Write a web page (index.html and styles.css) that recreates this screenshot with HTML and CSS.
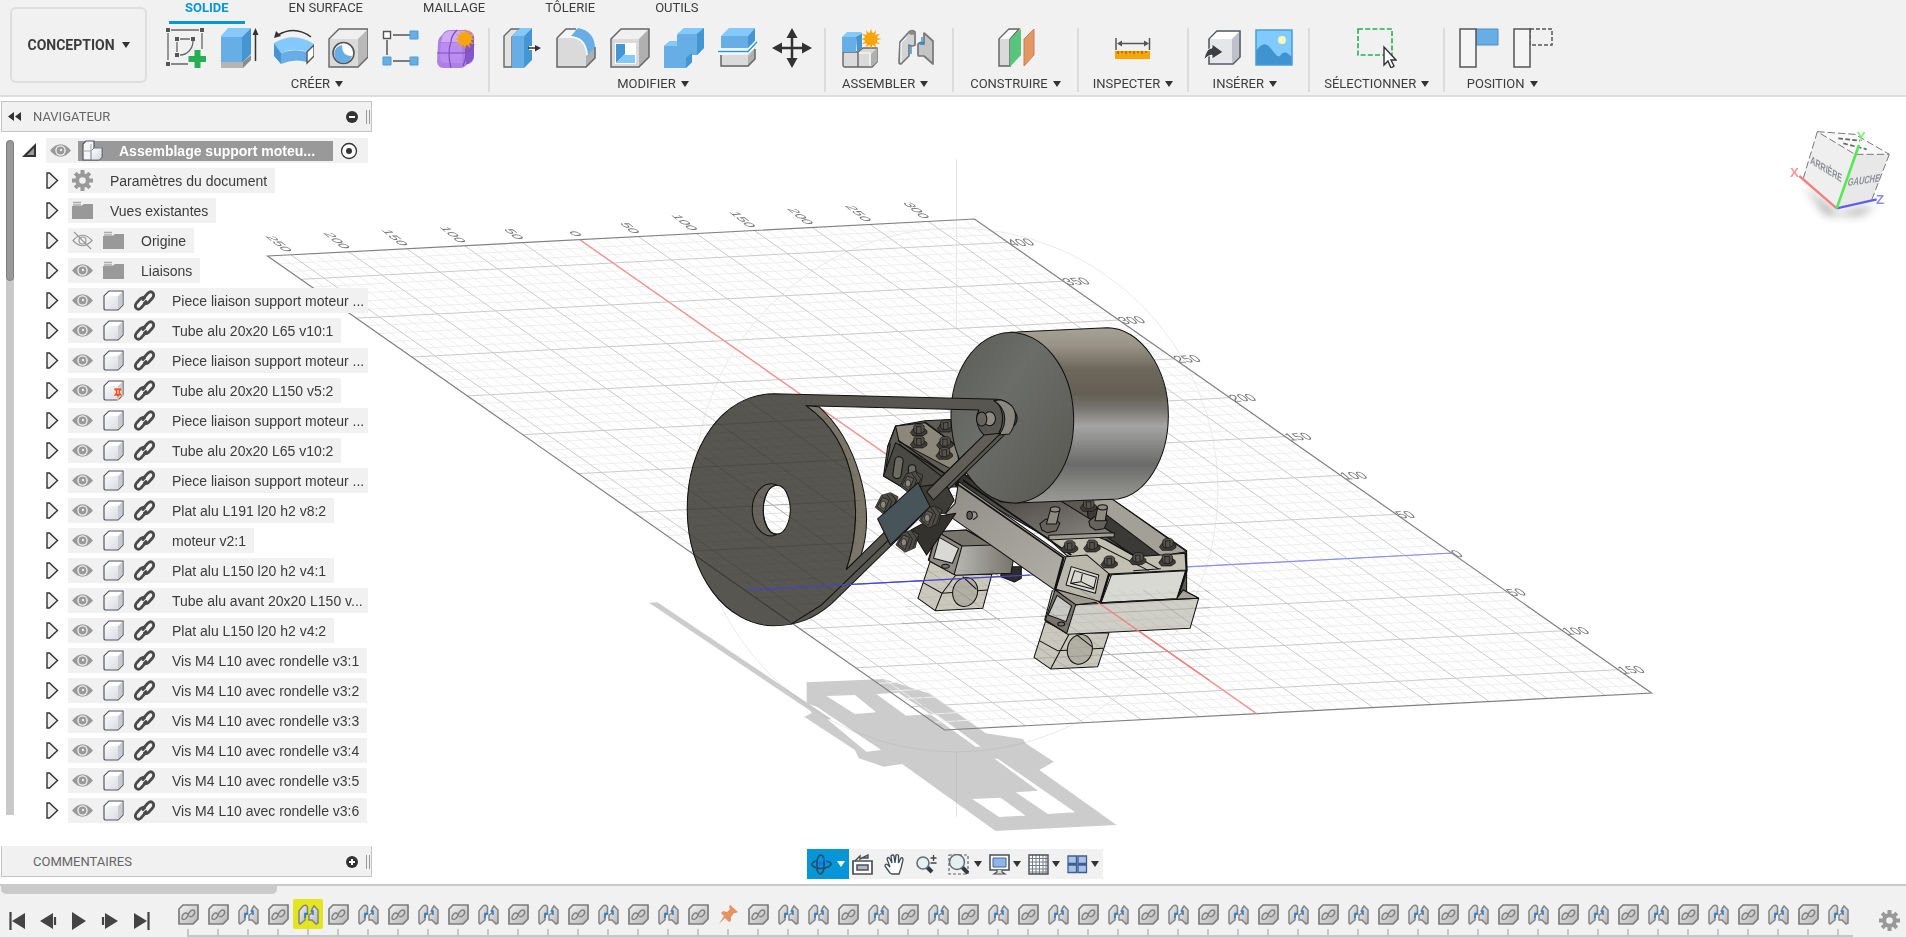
FILE: index.html
```html
<!DOCTYPE html>
<html lang="fr">
<head>
<meta charset="utf-8">
<title>Assemblage support moteur</title>
<link rel="stylesheet" href="styles.css">
</head>
<body>
<svg class="defs" aria-hidden="true">
  <defs>
    <g id="star" fill="#faa506">
      <circle r="6.5"/>
      <path id="ray" d="M0-10.5L2.8 0 0 10.5-2.8 0Z"/>
      <use href="#ray" transform="rotate(30)"/><use href="#ray" transform="rotate(60)"/><use href="#ray" transform="rotate(90)"/><use href="#ray" transform="rotate(120)"/><use href="#ray" transform="rotate(150)"/>
    </g>
    <linearGradient id="cubeFill" x1="0" y1="0" x2="1" y2="1"><stop offset="0" stop-color="#fff"/><stop offset="1" stop-color="#d5d6de"/></linearGradient>
    <linearGradient id="metal" x1="0" y1="0" x2="1" y2="1"><stop offset="0" stop-color="#f4f4f4"/><stop offset="1" stop-color="#b4b4b4"/></linearGradient>
  </defs>
  <symbol id="i-sketch" viewBox="0 0 40 40">
    <path d="M2 5V32M5 2H33M36 5V21M5 36H22M11 14V24M14 11H24M27 13C27 21 21 27 14 27" fill="none" stroke="#666" stroke-width="1.3"/>
    <path d="M0 0h4v4H0zM34 0h4v4h-4zM0 34h4v4H0zM9 9h4v4H9zM25 9h4v4h-4zM9 25h4v4H9z" fill="#555"/>
    <path d="M28.500 22h6v6h6v6h-6v6h-6v-6h-6v-6h6z" fill="#27ae52"/>
  </symbol>
  <symbol id="i-extrude" viewBox="0 0 40 40">
    <path d="M1 34H23V40H1Z" fill="#b5b5b5"/><path d="M23 34L31 27V32L23 40Z" fill="#8b8b8b"/>
    <path d="M1 9H22V34H1Z" fill="#68aee6"/><path d="M1 8L8 0H31L22 9H1Z" fill="#84c9fb"/><path d="M22 9L31 0V26L23 34H22Z" fill="#4396d2"/>
    <path d="M35.500 33V5" stroke="#333" stroke-width="1.500"/><path d="M35.500 0L38.500 7H32.500Z" fill="#333"/>
  </symbol>
  <symbol id="i-revolve" viewBox="0 0 40 40">
    <path d="M0 15Q20 3 40 16L34 24Q20 19 7 25Z" fill="#84c9fb"/>
    <path d="M0 15L7 25V36L0 28Z" fill="#4396d2"/><path d="M7 25Q20 20 33 24V34Q20 30 7 36Z" fill="#68aee6"/>
    <path d="M33 24L40 17V28L33 35Z" fill="#fff" stroke="#555" stroke-width="1.400"/>
    <path d="M37 9Q21-3 4 7" fill="none" stroke="#333" stroke-width="1.500"/><path d="M0 10L2 3 7 8Z" fill="#333"/>
  </symbol>
  <symbol id="i-hole" viewBox="0 0 40 40">
    <path d="M1 11L11 1H40V29L30 39H1Z" fill="#dadada"/><path d="M1 11L11 1H40L30 11Z" fill="#efefef"/><path d="M30 11L40 1V29L30 39Z" fill="#b9b9b9"/>
    <path d="M1 11L11 1H40V29L30 39H1Z" fill="none" stroke="#666" stroke-width="1.400"/>
    <circle cx="15.500" cy="25" r="10.500" fill="#fff" stroke="#555" stroke-width="1.600"/><path d="M14 17A9 9 0 1 0 24 28Q14 29 14 17Z" fill="#68aee6"/>
  </symbol>
  <symbol id="i-pattern" viewBox="0 0 40 40">
    <path d="M11 7H28M5 12V27M11 33H28" stroke="#555" stroke-width="1.500"/><path d="M1.500 3.500h7v7h-7z" fill="#fff" stroke="#555" stroke-width="1.400"/>
    <path d="M28 3h8v8h-8zM1 29h8v8H1zM28 29h8v8h-8z" fill="#68aee6" stroke="#4a9cd8"/>
  </symbol>
  <symbol id="i-form" viewBox="0 0 40 40">
    <path d="M2 15Q2 10 6 7Q9 2 14 2H30Q38 3 38 10V30Q36 36 31 36Q29 40 24 40H8Q2 40 1 34Z" fill="#b07fe6"/>
    <path d="M7 7Q10 3 14 3H30L33 10 28 14H5Z" fill="#cfaaf6"/><path d="M30 14L38 8V28Q37 34 30 37Z" fill="#8657c8"/>
    <path d="M5 15H26V35H7Q4 33 4 29Z" fill="#bb8df0"/>
    <path d="M1 25H28Q36 24 38 16M15 40Q11 24 15 14Q15 8 21 2M27 13Q33 25 27 38" fill="none" stroke="#7d4fbd" stroke-width="1.200"/>
    <use href="#star" x="29" y="11"/>
  </symbol>
  <symbol id="i-press" viewBox="0 0 40 40">
    <path d="M2 8L9 1H18L10 9V39H2Z" fill="#e2e2e2" stroke="#666" stroke-width="1.400"/>
    <path d="M10 8H22V40H10Z" fill="#68aee6"/><path d="M10 8L18 0H30L22 8Z" fill="#84c9fb"/><path d="M22 8L30 0V32L22 40Z" fill="#4396d2"/>
    <path d="M27 20H35" stroke="#fff" stroke-width="4"/><path d="M26 20H34" stroke="#333" stroke-width="1.500"/><path d="M33 17L39 20 33 23.500Z" fill="#333"/>
  </symbol>
  <symbol id="i-fillet" viewBox="0 0 40 40">
    <path d="M1 10L10 1H22C34 3 39 12 39 21V30L30 39H1Z" fill="#dadada"/><path d="M1 10L10 1H20L15 10Z" fill="#f5f5f5"/><path d="M30 28L39 18V30L30 39Z" fill="#b0b0b0"/>
    <path d="M1 10L10 1H20M39 19V30L30 39H1V10" fill="none" stroke="#666" stroke-width="1.500"/>
    <path d="M15 8L22 0Q38 3 39 19L32 27Q30 10 15 8Z" fill="#68aee6"/><path d="M15 9Q30 10 31 27" fill="none" stroke="#fff" stroke-width="1.500"/>
  </symbol>
  <symbol id="i-shell" viewBox="0 0 40 40">
    <path d="M1 11L11 1H39V29L29 39H1Z" fill="#dadada"/><path d="M1 11L11 1H39L29 11Z" fill="#f0f0f0"/><path d="M29 11L39 1V29L29 39Z" fill="#b0b0b0"/><path d="M1 11L11 1H39V29L29 39H1Z" fill="none" stroke="#666" stroke-width="1.500"/>
    <path d="M5 15H26V36H5Z" fill="#fff"/><path d="M6 16H15V26L6 35Z" fill="#4396d2"/><path d="M6 35L14 27H25V35Z" fill="#84c9fb"/><path d="M15 16H25V27H15Z" fill="#fff"/>
  </symbol>
  <symbol id="i-combine" viewBox="0 0 40 40">
    <path d="M0 18L6 13H13V7L20 0H40V20L33 27H28V34L22 40H0Z" fill="#68aee6"/><path d="M0 18L6 13H13V6L20 0H40L33 6H13V18Z" fill="#84c9fb"/><path d="M33 6L40 0V20L33 27ZM22 30L26 26H28V34L22 40Z" fill="#4396d2"/>
  </symbol>
  <symbol id="i-split" viewBox="0 0 40 40">
    <path d="M3 8H30V20H3Z" fill="#68aee6"/><path d="M3 8L11 0H37L30 8Z" fill="#84c9fb"/><path d="M30 8L37 0V13L30 20Z" fill="#4396d2"/>
    <path d="M3 27H29L37 20V31L30 39H3Z" fill="#dadada"/><path d="M30 28L37 20V31L30 39Z" fill="#b0b0b0"/><path d="M3 27V38H30L37 31V21" fill="none" stroke="#666" stroke-width="1.500"/>
    <path d="M0 23.500H30L39 14" fill="none" stroke="#fff" stroke-width="4"/><path d="M0 23.500H30L39 14" fill="none" stroke="#1f97e6" stroke-width="1.500"/>
  </symbol>
  <symbol id="i-move" viewBox="0 0 40 40">
    <path d="M20 6V34M6 20H34" stroke="#333" stroke-width="2.500"/><path d="M20 0L25.500 10H14.500ZM20 40L25.500 30H14.500ZM0 20L10 14.500V25.500ZM40 20L30 14.500V25.500Z" fill="#333"/>
  </symbol>
  <symbol id="i-component" viewBox="0 0 40 40">
    <path d="M1 24H16V39H3Q1 39 1 37ZM16 24L21 20H35V34L30 39H16Z" fill="#dadada" stroke="#666" stroke-width="1.400"/><path d="M29 26L35 20V34L29 39Z" fill="#b0b0b0"/><path d="M17 25H28V38" fill="none" stroke="#fff"/>
    <path d="M0 9H14V24H0Z" fill="#68aee6"/><path d="M0 9L5 4H20L15 9Z" fill="#84c9fb"/><path d="M14 9L20 5V20L15 24Z" fill="#4396d2"/>
    <use href="#star" x="29" y="11"/>
  </symbol>
  <symbol id="i-joint" viewBox="0 0 40 40">
    <path d="M4 14L12 5Q15 1 19 4V17Q16 19 13 17V28L5 36Q3 36 3 34Z" fill="#d2d2d2" stroke="#777" stroke-width="1.700" stroke-linejoin="round"/>
    <ellipse cx="16" cy="5" rx="3" ry="1.800" fill="#888"/><path d="M5 34V15L11 9" fill="none" stroke="#fff"/>
    <path d="M22 16Q25 13 28 16V5L37 13V36L28 28H23Q22 28 22 26Z" fill="#c4c4c4" stroke="#777" stroke-width="1.700" stroke-linejoin="round"/>
    <path d="M15 17V26M26 9V17M23.500 16H28" stroke="#1f97e6" stroke-width="1.400"/>
  </symbol>
  <symbol id="i-plane" viewBox="0 0 40 40">
    <path d="M4 11L14 1H24L15 11V38H4Z" fill="#dadada" stroke="#666" stroke-width="1.500"/><path d="M5 11L14 2H22L14 11Z" fill="#fff"/>
    <path d="M15 11L26 1V27L15 39Z" fill="#57c57c"/><path d="M29 11L39 1V27L29 38Z" fill="#e39763" stroke="#c98050"/>
  </symbol>
  <symbol id="i-measure" viewBox="0 0 40 40">
    <path d="M3 10V22M36.500 10V22M6 15.500H34" stroke="#555" stroke-width="1.500"/><path d="M4 15.500L9 12.500V18.500ZM36 15.500L31 12.500V18.500Z" fill="#555"/>
    <path d="M2 23H37V31H2Z" fill="#faa506"/><path d="M5 23v3M9 23v2M13 23v3M17 23v2M21 23v3M25 23v2M29 23v3M33 23v2" stroke="#704600"/>
  </symbol>
  <symbol id="i-insert" viewBox="0 0 40 40">
    <path d="M6 11L14 3H37V29L30 36H6Z" fill="#e5e6ea" stroke="#555a63" stroke-width="1.600"/><path d="M7 11L14 4H36L29 11Z" fill="#fff"/><path d="M29 11L36 4V29L29 35Z" fill="#bfc1ca"/>
    <path d="M1 32Q3 20 9 20V16L20 24 9 31V27Q5 27 1 32Z" fill="#3c3f44" stroke="#fff" stroke-width=".8"/>
  </symbol>
  <symbol id="i-image" viewBox="0 0 40 40">
    <path d="M2 2H38V37H2Z" fill="#80caff"/><path d="M2 23Q8 14 13 17C19 21 22 30 26 28C30 22 33 25 38 29V37H2Z" fill="#3f94cf"/><path d="M2 2H38V37H2Z" fill="none" stroke="#4a9cd8" stroke-width="1.500"/><circle cx="28" cy="12" r="4" fill="#fbf8b8"/>
  </symbol>
  <symbol id="i-select" viewBox="0 0 40 40">
    <path d="M1 1H35V27H1Z" fill="none" stroke="#27ae52" stroke-width="1.600" stroke-dasharray="5 2.200"/><path d="M27 19V37L31 33 34 40 37 38 34 32H39Z" fill="#fff" stroke="#333" stroke-width="1.400"/>
  </symbol>
  <symbol id="i-pos1" viewBox="0 0 40 40">
    <path d="M17 1H39V17H17Z" fill="#68aee6" stroke="#4a8fc4"/><path d="M1 1H17V39H1Z" fill="#f5f5f5" stroke="#555" stroke-width="1.500"/>
  </symbol>
  <symbol id="i-pos2" viewBox="0 0 40 40">
    <path d="M17 1H39V17H17Z" fill="none" stroke="#555" stroke-width="1.500" stroke-dasharray="4 2"/><path d="M1 1H17V39H1Z" fill="#f5f5f5" stroke="#555" stroke-width="1.500"/>
  </symbol>

  <symbol id="t-eye" viewBox="0 0 21 21">
    <path d="M0 10.500Q10.500-2 21 10.500Q10.500 23 0 10.500Z" fill="#999"/><circle cx="10.500" cy="10.500" r="5.200" fill="#f1f1f1"/><circle cx="10.500" cy="10.500" r="3.900" fill="#999"/><circle cx="11" cy="10" r="1.200" fill="#eee"/>
  </symbol>
  <symbol id="t-hidden" viewBox="0 0 21 21">
    <path d="M1 10.500Q10.500 0 20 10.500Q10.500 21 1 10.500ZM2 2L19 19" fill="none" stroke="#999" stroke-width="1.200"/><circle cx="10.500" cy="10.500" r="3.500" fill="none" stroke="#999" stroke-width="1.200"/>
  </symbol>
  <symbol id="t-folder" viewBox="0 0 21 21"><path d="M0 6H9L12 4H21V19H0Z" fill="#999"/><path d="M1 2.500H9M1 5H9" stroke="#aaa" stroke-width="1.400"/></symbol>
  <symbol id="t-gear" viewBox="0 0 21 21">
    <g stroke="#999" stroke-width="4"><path d="M10.500 0V21M0 10.500H21M3.200 3.200L17.800 17.800M17.800 3.200L3.200 17.800"/></g><circle cx="10.500" cy="10.500" r="7.300" fill="#999"/><circle cx="10.500" cy="10.500" r="3.300" fill="#f1f1f1"/>
  </symbol>
  <symbol id="t-cube" viewBox="0 0 21 21">
    <path d="M1 6L6 1H20V15L15 20H2L1 19Z" fill="url(#cubeFill)" stroke="#555863" stroke-width="1.200"/><path d="M15 6L19.500 1.500V15L15 19.500Z" fill="#c9cad2"/><path d="M2 6L6 2H19L15 6Z" fill="#fff"/>
  </symbol>
  <symbol id="t-pinned" viewBox="0 0 21 21">
    <use href="#t-cube"/><path d="M11 8H19V10L17.500 11V13L20 16H16L15 21 14 16H10L12.500 13V11L11 10Z" fill="#e4572a" stroke="#fff" stroke-width=".5"/><path d="M14 10H16V14H14Z" fill="#f8a36b"/>
  </symbol>
  <symbol id="t-link" viewBox="0 0 21 21">
    <g fill="none" stroke="#4a4a4a" stroke-width="2.800" stroke-linecap="round"><path d="M9 9.500L10 7.500 14 3Q17 .5 19 3Q20.500 5.500 18.500 8L14.500 12.500Q12 14.500 10.500 13"/><path d="M12 11.500L11 13.500 7 18Q4 20.500 2 18Q.5 15.500 2.500 13L6.500 8.500Q9 6.500 10.500 8"/></g>
  </symbol>
  <symbol id="t-assembly" viewBox="0 0 21 21">
    <path d="M1 4L4 1H12V12H18L20 9V17L17 20H1Z" fill="#f5f5f7" stroke="#555863" stroke-width="1.200"/><path d="M9 11L12 8H20V17L17 20H9Z" fill="url(#cubeFill)" stroke="#777a85"/><path d="M1 11H9M9 4V11" stroke="#aaa"/>
  </symbol>
  <symbol id="t-open" viewBox="0 0 15 15"><path d="M0 14L14 0V14Z" fill="#333"/><path d="M5 12L12 5V12Z" fill="#999"/></symbol>
  <symbol id="t-closed" viewBox="0 0 13 17"><path d="M1 1H3.500L11.500 8.500 3.500 16H1Z" fill="#eee" stroke="#333" stroke-width="1.400"/></symbol>

  <symbol id="m-link" viewBox="0 0 21 21">
    <path d="M1 5L5 1H20V15L15 20H1Z" fill="url(#metal)" stroke="#7c7c7c" stroke-width="1.700"/>
    <g fill="none" stroke="#808080" stroke-width="1.400"><path d="M9.500 11L12.500 7Q15 5 16.500 7Q17.500 9 15 11.500Q13 13.500 11.500 12"/><path d="M11 10.500L8 14.500Q5.500 16.500 4 14.500Q3.500 12.500 5.500 10Q8 8 9.500 10"/></g>
  </symbol>
  <symbol id="m-joint" viewBox="0 0 21 21">
    <path d="M1 7L5 2Q8 0 9.500 3V10L7 11V16L2 20 1 19Z" fill="url(#metal)" stroke="#848484" stroke-width="1.500"/>
    <path d="M11 11L14 9V5L16 2 20 6V19L18 20 14 16H11Z" fill="url(#metal)" stroke="#848484" stroke-width="1.500"/><path d="M7 14V9.500H10M12.500 7H15V11" fill="none" stroke="#1f80cf" stroke-width="1.500"/>
  </symbol>
  <symbol id="m-pin" viewBox="0 0 21 21"><path d="M12 1L20 8 18 9 16 9 13 13 13 17 11 18 7 14 1 20 6 12 3 9 5 7 9 8 12 5 11 3Z" fill="#e5935f"/></symbol>
</svg>

<header class="ribbon">
  <button class="workspace">CONCEPTION <span class="caret"></span></button>
  <div class="ribbon-body">
    <nav class="tabs" aria-label="Onglets">
      <button class="tab tab-active">SOLIDE</button><button class="tab">EN SURFACE</button><button class="tab">MAILLAGE</button><button class="tab">TÔLERIE</button><button class="tab">OUTILS</button>
    </nav>
    <div class="groups" id="groups"></div>
  </div>
</header>

<main class="stage">
  <svg class="scene" id="scene" viewBox="0 97 1906 787" role="img" aria-label="Vue 3D de l'assemblage">
    <defs>
      <linearGradient id="motorSide" x1="0" y1="0" x2="0" y2="1">
        <stop offset="0" stop-color="#a6a297"/><stop offset=".1" stop-color="#989487"/><stop offset=".24" stop-color="#6d675b"/><stop offset=".38" stop-color="#645f54"/><stop offset=".46" stop-color="#777570"/><stop offset=".56" stop-color="#a4a4a2"/><stop offset=".66" stop-color="#8a8a88"/><stop offset=".78" stop-color="#6b6b69"/><stop offset=".92" stop-color="#8b8b88"/><stop offset="1" stop-color="#9a9a96"/>
      </linearGradient>
      <linearGradient id="motorFace" x1="0" y1="0" x2="1" y2="1"><stop offset="0" stop-color="#5a5b58"/><stop offset=".4" stop-color="#6b6d69"/><stop offset="1" stop-color="#585751"/></linearGradient>
      <linearGradient id="beam" x1="0" y1="0" x2="1" y2="1"><stop offset="0" stop-color="#8f8d86"/><stop offset="1" stop-color="#b2afa7"/></linearGradient>
      <linearGradient id="tube" x1="0" y1="0" x2="1" y2="0"><stop offset="0" stop-color="#d6d6d2"/><stop offset="1" stop-color="#76736b"/></linearGradient>
      <linearGradient id="plate" x1="0" y1="0" x2="1" y2="1"><stop offset="0" stop-color="#2d2b28"/><stop offset="1" stop-color="#8b8881"/></linearGradient>
      <filter id="soft" x="-30%" y="-30%" width="160%" height="160%"><feGaussianBlur stdDeviation="14"/></filter>
      <clipPath id="overModel"><ellipse cx="773" cy="509" rx="87" ry="116"/><path d="M915 570L1000 570 1000 630H900ZM1045 590H1210V680H1030Z"/></clipPath>
      <g id="bolt">
        <path d="M-24 6L-16 16H12L24 8V0L14-8H-14Z" fill="#3d3c37" stroke="#111" stroke-width="2"/>
        <path d="M-14-14L-6-20H8L16-14V2L6 8H-8L-14 2Z" fill="#55534b" stroke="#111" stroke-width="2"/>
        <path d="M-8-12L8-13M-6-12V7M7-12V6" fill="none" stroke="#111" stroke-width="2"/>
      </g>
      <g id="clampbit">
        <path d="M-34 10L-16-26 10-34 32-22 22 18-8 32Z" fill="#4f4c45" stroke="#111" stroke-width="2"/><path d="M0-28L14-8 4 22M12-30L26-12 16 18" fill="none" stroke="#111" stroke-width="2"/><path d="M-28 8L-13-20 6-12-8 24Z" fill="#5f5c54" stroke="#111" stroke-width="2"/><ellipse cx="-11" cy="2" rx="8" ry="11" fill="#8a877d" stroke="#111" stroke-width="2"/>
      </g>
    </defs>

    <g transform="translate(640 570) scale(.4974 .3333)" fill="#ccc">
      <path fill-rule="evenodd" d="M335 337L490 327 585 372 695 490 770 507 775 520 832 575 803 600 958 765 715 783 527 582 490 590 440 565 432 540 330 440 345 430 335 395ZM375 378L432 432 475 427 432 375ZM475 372L535 437 583 432 520 368ZM583 432L675 530 685 530 597 434ZM712 565L800 662 755 667 820 732 875 727 720 567ZM668 687L722 741 775 737 725 683ZM340 402L455 545 485 540 357 412Z"/>
      <path d="M18 98L35 97 385 447 370 450Z"/>
    </g>
    <circle cx="956" cy="490" r="262" fill="none" stroke="#999" stroke-opacity=".22"/>
    <path d="M956.500 159V330M956.500 752V817" stroke="#999" stroke-opacity=".25"/>
    <g id="grid"></g>
    <g id="gridLabels" class="grid-label"></g>
    <path d="M580 240L1257 714" stroke="#ff8c8c" stroke-width="1.200"/>
    <path d="M746 590L1453 553" stroke="#8c8cff" stroke-width="1.200"/>

    <g transform="translate(670 300) scale(.3444 .3333)" stroke="#111" stroke-width="3" stroke-linejoin="round">
      <!-- rear bracket -->
      <path d="M655 378L740 362 830 358 860 520 830 560 690 570 620 528 632 440Z" fill="#5f5c53"/>
      <path d="M655 378L740 368 835 440 840 520 665 425Z" fill="#8b877b"/>
      <path d="M655 428L620 528 690 572 810 610 800 522Z" fill="#4b4943"/>
      <path d="M662 420L800 522M665 432L790 530M740 365L835 440M632 440L655 378M628 500L640 430" fill="none"/>
      <rect x="650" y="470" width="24" height="66" rx="12" transform="rotate(8 662 503)" fill="#6d6a61"/><rect x="692" y="494" width="22" height="50" rx="11" fill="#6d6a61"/>
      <use href="#bolt" x="722" y="392"/><use href="#bolt" x="800" y="380"/><use href="#bolt" x="722" y="428"/><use href="#bolt" x="798" y="430"/><use href="#bolt" x="796" y="462"/>
      <!-- deck and far rail -->
      <path d="M1200 590L1285 598 1500 752 1500 880 1280 830 1100 700 830 560 830 520Z" fill="#5b5952"/>
      <path d="M1210 600L1285 598 1500 755 1425 768 1385 760Z" fill="#a3a097"/><path d="M1210 600L1425 768 1350 770 1215 672Z" fill="#3c3a36"/>
      <path d="M1150 765L1100 718 1215 700 1265 720 1350 770 1500 760 1500 810 1275 822Z" fill="#c2bfb3"/>
      <path d="M1215 720L1390 812M1265 718L1420 808M1345 812L1425 806M1150 778L1210 775" fill="none"/>
      <path d="M960 606L1130 600 1290 702 1100 716 830 555 850 520Z" fill="url(#plate)"/><path d="M1100 706L1290 698V710L1100 720Z" fill="#a09d94"/>
      <use href="#bolt" x="1215" y="618"/>
      <!-- rear tube and clamp -->
      <path d="M965 800L1020 800V835L1000 846 960 830Z" fill="#2f2d2a"/>
      <path d="M755 785L830 825 935 822 908 925 770 932 720 895Z" fill="#cbc9bd"/>
      <path d="M830 825L790 880 770 932M735 848L790 880 922 870" fill="none"/>
      <ellipse cx="857" cy="876" rx="36" ry="44" transform="rotate(12 857 876)" fill="#b2afa4"/><path d="M850 830L890 868" fill="none"/>
      <path d="M775 695L860 690 1000 760 990 820 830 826 750 780Z" fill="url(#tube)"/><path d="M775 695L860 690 935 735 848 738Z" fill="#77746c"/><path d="M775 695L848 738 825 824 752 782Z" fill="#8e8c85"/><path d="M782 712L838 745 820 790 765 775Z" fill="#d8d8d5"/><ellipse cx="800" cy="799" rx="11" ry="6" fill="#77746c"/>
      <!-- main beam -->
      <path d="M838 545L1150 772 1120 872 800 640 828 610Z" fill="url(#beam)"/><path d="M828 548L1145 775M850 540L1165 765" fill="none" stroke-width="5"/>
      <path d="M1150 770L1210 765 1275 822 1250 908 1120 868Z" fill="#bab7ab"/>
      <path d="M1165 800L1245 825 1235 880 1150 855Z" fill="#d9d8cf"/><path d="M1175 812L1238 832 1230 868 1163 850ZM1198 818L1193 845 1232 865M1193 845L1165 850" fill="none"/>
      <path d="M1142 775L1118 868M1275 822L1250 908" fill="none" stroke-width="7"/>
      <path d="M1282 824L1497 812 1473 896 1252 908Z" fill="#d8d9d2"/><path d="M1497 760L1500 812 1473 896" fill="none" stroke-width="6"/>
      <ellipse cx="870" cy="646" rx="8" ry="12" fill="#5d5b54"/><path d="M878 636Q892 632 892 650L880 660" fill="none"/>
      <!-- front tube and clamp -->
      <path d="M1090 965L1160 1000 1275 998 1242 1100 1105 1107 1057 1072Z" fill="#cbc9bd"/><path d="M1160 1000L1105 1107M1072 1022L1125 1052 1258 1045" fill="none"/>
      <ellipse cx="1190" cy="1048" rx="36" ry="45" transform="rotate(12 1190 1048)" fill="#b2afa4"/><path d="M1180 1004L1225 1040" fill="none"/>
      <path d="M1110 872L1250 908 1473 896 1490 870 1535 895 1510 985 1155 1003 1088 960Z" fill="#cfcfc7"/>
      <path d="M1118 868L1250 905 1175 915Z" fill="#a09b90"/><path d="M1490 870L1535 895 1470 898Z" fill="#aaa59a"/>
      <path d="M1118 870L1178 914 1152 1000 1090 960Z" fill="#77746d"/><path d="M1124 886L1166 918 1150 965 1098 945Z" fill="#c9c9c5"/><path d="M1178 914L1535 895" fill="none"/><ellipse cx="1136" cy="972" rx="10" ry="6" fill="#77746c"/>
      <use href="#bolt" x="1160" y="742"/><use href="#bolt" x="1225" y="740"/><use href="#bolt" x="1275" y="788"/><use href="#bolt" x="1358" y="778"/><use href="#bolt" x="1443" y="782"/><use href="#bolt" x="1445" y="735"/>
      <g fill="#65635b"><path d="M1074 672L1090 658H1120L1132 670 1122 692 1095 698 1080 690Z"/><path d="M1105 628H1132L1122 672H1093Z" fill="#8d8a80"/><ellipse cx="1118" cy="628" rx="14" ry="8" fill="#8d8a80"/><path d="M1216 664L1232 650H1260L1270 665 1260 686 1235 690 1220 680Z"/><path d="M1242 622H1270L1264 662H1234Z" fill="#8d8a80"/><ellipse cx="1256" cy="622" rx="14" ry="8" fill="#8d8a80"/></g>
      <!-- motor -->
      <path d="M990 97L1270 83C1365 83 1447 205 1447 345C1447 480 1380 585 1300 597L1000 609Z" fill="url(#motorSide)"/>
      <ellipse cx="994" cy="353" rx="178" ry="256" transform="rotate(-2 994 353)" fill="url(#motorFace)"/>
      <ellipse cx="992" cy="355" rx="16" ry="24" fill="#45443f"/>
      <!-- wheel -->
      <path fill="#575650" fill-rule="evenodd" d="M300 281L950 298C985 300 1002 335 990 372Q985 390 968 408L470 910C420 955 370 977 300 977C165 977 50 825 50 628C50 440 150 285 300 281ZM395 317C552 430 562 660 512 808L912 405C890 385 885 350 897 330ZM310 556A39 73 0 1 0 310.100 556Z"/>
      <path d="M300 552A55 78 0 1 0 310 704A39 73 0 0 1 310 556Q305 552 300 552Z" fill="#68645b"/>
      <path d="M395 317L432 320C540 420 600 620 555 765L512 808C562 660 552 430 395 317Z" fill="#7b7568"/>
      <path d="M960 299Q1005 312 1003 352Q1000 385 985 402L955 405Q978 375 970 340Q962 315 940 302Z" fill="#8a8780"/>
      <path d="M940 302C965 315 975 360 955 400L440 915 350 973" fill="none"/>
      <ellipse cx="928" cy="356" rx="17" ry="21" fill="#8d8b84"/><ellipse cx="905" cy="357" rx="15" ry="21" fill="#66645d"/>
      <!-- tensioner -->
      <path d="M700 690L770 650 830 640 790 700 745 765Z" fill="#34322e"/>
      <path d="M720 560L800 550 825 600 800 640 750 640Z" fill="#3e3c37"/>
      <path d="M912 405L960 400 765 600 745 575Z" fill="#605e57"/>
      <use href="#clampbit" x="702" y="548"/><use href="#clampbit" x="630" y="612"/><use href="#clampbit" x="758" y="652"/><use href="#clampbit" x="690" y="725"/>
      <path d="M720 548L755 620 640 735 603 657Z" fill="#47555a"/>
    </g>
    <g clip-path="url(#overModel)" class="see-through"><use href="#grid"/></g>
    <path d="M746 590L1030 575" stroke="#4646c8" stroke-width="1.200"/>
    <path d="M1097 602L1200 674" stroke="#ff8080" stroke-width="1.200"/>

    <g transform="translate(1760 110) scale(.3333)">
      <path d="M130 225L230 310 350 285 300 315H200Z" fill="#888" filter="url(#soft)" opacity=".8"/>
      <path d="M172 65L285 73 388 133H285Z" fill="#f8f8f8"/><path d="M172 65L285 133 230 295 130 205Z" fill="#efefef"/><path d="M285 133H388L335 270 230 295Z" fill="#e8e8e8"/>
      <path d="M172 65L285 73 388 133H285ZM172 65L130 205M388 133L335 270" fill="none" stroke="#777" stroke-width="3" stroke-dasharray="22 9"/>
      <path d="M235 85L300 92M250 100L320 118" stroke="#666" stroke-width="5" stroke-dasharray="14 7"/>
      <text class="cube-text" transform="matrix(.7 .42 -.15 1.1 150 160)">ARRIÈRE</text>
      <text class="cube-text" transform="matrix(.74 -.1 -.2 1.1 262 228)">GAUCHE</text>
      <path d="M230 295L118 198" stroke="#f28080" stroke-width="7"/><path d="M230 295L350 268" stroke="#5f5fee" stroke-width="7"/><path d="M230 295L297 105" stroke="#59e659" stroke-width="8"/>
      <g class="axis-text"><text x="90" y="202" fill="#f79a9a">X</text><text x="290" y="94" fill="#7cf07c">Y</text><text x="348" y="281" fill="#8a8af5">Z</text></g>
    </g>
  </svg>

  <aside class="browser">
    <div class="panel-head">
      <button class="head-btn" aria-label="Réduire"><svg width="13" height="9" viewBox="0 0 13 9"><path d="M6 0V9L0 4.500ZM13 0V9L7 4.500Z" fill="#333"/></svg></button>
      <span class="head-title">NAVIGATEUR</span>
      <button class="head-btn" aria-label="Masquer"><svg width="12" height="12" viewBox="0 0 12 12"><circle cx="6" cy="6" r="6" fill="#333"/><path d="M3 6H9" stroke="#fff" stroke-width="2"/></svg></button>
      <span class="grip"></span>
    </div>
    <div class="tree-wrap">
      <div class="scrollbar"><div class="scroll-thumb"></div></div>
      <ul class="tree" id="tree"></ul>
    </div>
  </aside>

  <section class="comments panel-head">
    <span class="head-title">COMMENTAIRES</span>
    <button class="head-btn" aria-label="Ajouter"><svg width="12" height="12" viewBox="0 0 12 12"><circle cx="6" cy="6" r="6" fill="#333"/><path d="M3 6H9M6 3V9" stroke="#fff" stroke-width="2"/></svg></button>
    <span class="grip"></span>
  </section>

  <div class="viewbar">
    <button class="view-btn view-active" aria-label="Orbite"><svg width="21" height="21" viewBox="0 0 21 21"><g fill="none" stroke="#24506e" stroke-width="1.700"><path d="M6 16V7Q7 1 10 1Q13 2 13 6V14Q12 20 9 20Q7 19 6 16"/><path d="M5 7Q1 8 1 11Q3 14 10 14.500Q19 14 20 10Q20 8 15 7"/></g><path d="M9 7V12M7 9.500H12M13 3.500V7M16 6V9" stroke="#1b6df0" stroke-width="1.400"/></svg><span class="caret caret-light"></span></button>
    <button class="view-btn" aria-label="Regarder"><svg width="21" height="21" viewBox="0 0 21 21"><path d="M1 7H20V20H1Z" fill="#fff" stroke="#4a4f5a" stroke-width="1.700"/><path d="M5 11H16V16H5Z" fill="#b6b9c4" stroke="#4a4f5a" stroke-width="1.500"/><path d="M3 7L8 2V5L16 1V4H9" fill="none" stroke="#4a4f5a" stroke-width="1.400"/></svg></button>
    <button class="view-btn" aria-label="Panoramique"><svg width="21" height="21" viewBox="0 0 21 21"><path d="M6 19L1 12Q1 9 4 11L6 13 3 5Q4 2 6 5L8 9 7 2Q9 0 10 2L11 9 12 1Q14 0 14.500 2V9L17 4Q19 3 19 6L17 14 15 20H8Z" fill="#fff" stroke="#444a55" stroke-width="1.300"/></svg></button>
    <button class="view-btn" aria-label="Zoom"><svg width="21" height="21" viewBox="0 0 21 21"><path d="M11 13L16 18" stroke="#333a45" stroke-width="4"/><circle cx="7" cy="9" r="6" fill="#e6f1f1" stroke="#666d78" stroke-width="1.600"/><path d="M14.500 4H20.500M17.500 1V7M14.500 9H20.500" stroke="#444" stroke-width="1.300"/></svg></button>
    <button class="view-btn" aria-label="Ajuster"><svg width="21" height="21" viewBox="0 0 21 21"><path d="M1 1H20V20H1Z" fill="none" stroke="#666" stroke-dasharray="3 2" stroke-width="1.200"/><path d="M14 13L20 19" stroke="#333a45" stroke-width="4"/><circle cx="9" cy="8" r="7.500" fill="#e4f0ee" stroke="#666d78" stroke-width="1.500"/></svg><span class="caret"></span></button>
    <button class="view-btn" aria-label="Affichage"><svg width="21" height="21" viewBox="0 0 21 21"><path d="M1 1H20V16H1Z" fill="#fff" stroke="#4a4f5a" stroke-width="1.600"/><path d="M4 4H17V13H4Z" fill="#8fb5ea" stroke="#41649a"/><path d="M8 16V18L5 20H16L13 18V16" fill="#ddd" stroke="#4a4f5a" stroke-width="1.200"/></svg><span class="caret"></span></button>
    <button class="view-btn" aria-label="Grille"><svg width="21" height="21" viewBox="0 0 21 21"><path d="M1 1H20V20H1Z" fill="#fff"/><path d="M4.500 1V20M8 1V20M11.500 1V20M15 1V20M18 1V20M1 4.500H20M1 8H20M1 11.500H20M1 15H20M1 18H20" stroke="#777b85"/><path d="M1 1H20V20H1Z" fill="none" stroke="#4a4f5a" stroke-width="1.400"/></svg><span class="caret"></span></button>
    <button class="view-btn" aria-label="Fenêtres"><svg width="21" height="21" viewBox="0 0 21 21"><path d="M1 2H9.500V9.500H1ZM11 2H19.500V9.500H11ZM1 11H9.500V18.500H1ZM11 11H19.500V18.500H11Z" fill="#a9c2e8" stroke="#3e5e92" stroke-width="1.300"/></svg><span class="caret"></span></button>
  </div>
</main>

<footer class="timeline">
  <div class="time-scroll"></div>
  <div class="time-body">
    <div class="player">
      <button class="play-btn" aria-label="Début"><svg width="18" height="18" viewBox="0 0 18 18"><path d="M2.500 0V18" stroke="#444" stroke-width="2.200"/><path d="M17 1V17L4 9Z" fill="#444"/></svg></button>
      <button class="play-btn" aria-label="Étape précédente"><svg width="18" height="18" viewBox="0 0 18 18"><path d="M14 1V17L1 9Z" fill="#444"/><path d="M16 5V13" stroke="#444" stroke-width="2.200"/></svg></button>
      <button class="play-btn" aria-label="Lecture"><svg width="18" height="18" viewBox="0 0 18 18"><path d="M2 0V18L16 9Z" fill="#444"/></svg></button>
      <button class="play-btn" aria-label="Étape suivante"><svg width="18" height="18" viewBox="0 0 18 18"><path d="M4 1V17L17 9Z" fill="#444"/><path d="M2 5V13" stroke="#444" stroke-width="2.200"/></svg></button>
      <button class="play-btn" aria-label="Fin"><svg width="18" height="18" viewBox="0 0 18 18"><path d="M16.500 0V18" stroke="#444" stroke-width="2.200"/><path d="M2 1V17L15 9Z" fill="#444"/></svg></button>
    </div>
    <div class="steps" id="steps"></div>
    <button class="settings" aria-label="Paramètres"><svg width="21" height="21"><use href="#t-gear"/></svg></button>
  </div>
</footer>
<script src="app.js"></script>
</body>
</html>
```
FILE: styles.css
```css
* { box-sizing: border-box; }
body {
  margin: 0; min-height: 100vh; display: flex; flex-direction: column;
  background: #fff; color: #3c3c3c; overflow: hidden;
  font-family: Roboto, "Liberation Sans", sans-serif; font-size: 13px;
}
button { border: 0; padding: 0; background: none; color: inherit; font: inherit; display: flex; align-items: center; }
svg { display: block; flex: none; }
.defs { position: absolute; width: 0; height: 0; }
.caret { display: inline-block; width: 0; height: 0; border: 4px solid transparent; border-top: 6px solid #333; border-bottom: 0; }
.caret-light { border-top-color: #fff; }

.ribbon { display: flex; background: #f1f1f1; border-bottom: 2px solid #ddd; }
.workspace {
  width: 137px; height: 76px; margin: 7px 7px 0 10px; justify-content: center; gap: 7px;
  border: 2px solid #dedede; border-radius: 6px; font-size: 14px; font-weight: 700;
}
.ribbon-body { display: flex; flex-direction: column; }
.tabs { display: flex; gap: 28px; padding-left: 15px; }
.tab { height: 24px; padding: 0 16px 5px; line-height: 16px; border-bottom: 3px solid transparent; }
.tab-active { color: #0696d7; border-color: #0696d7; font-weight: 700; }
.groups { display: flex; padding: 4px 0 3px; }
.group { display: flex; flex-direction: column; align-items: center; gap: 8px; padding: 0 16px; border-right: 2px solid #dcdcdc; }
.group-wide { padding: 0 12px; }
.group:nth-child(n+5) { padding: 0 14px; }
.group:last-child { border-right: 0; }
.tools { display: flex; gap: 14px; }
.group:nth-child(6) .tools { gap: 11px; }
.group-label { gap: 5px; line-height: 16px; }
.group-multi .group-label { padding-right: 8px; }

.stage { position: relative; flex: 1; min-height: 0; display: flex; }
.scene { width: 100%; height: 100%; }
.see-through { mix-blend-mode: multiply; opacity: .7; }
.grid-label { font-family: "Liberation Sans", sans-serif; font-size: 14px; fill: #777; }
.cube-text { font-family: "Liberation Sans", sans-serif; font-size: 30px; font-weight: 700; fill: #8b8f96; }
.axis-text { font-family: "Liberation Sans", sans-serif; font-size: 40px; font-weight: 700; }

.browser { position: absolute; left: 1px; top: 4px; width: 371px; }
.panel-head { display: flex; align-items: center; height: 31px; padding: 0 1px 0 6px; background: #f1f1f1; border: 1px solid #c4c4c4; color: #666; }
.head-title { flex: 1; padding-left: 12px; }
.grip { width: 4px; height: 14px; margin-left: 8px; border: solid #999; border-width: 0 1px; }
.tree-wrap { display: flex; padding: 6px 0 0 5px; }
.scrollbar { width: 8px; background: #c9c9c9; border-radius: 4px 4px 0 0; margin: 2px 0 13px; }
.scroll-thumb { height: 141px; background: #999; border: 1px solid #808080; border-radius: 4px; }
.tree { flex: 1; margin: 0; padding: 0; list-style: none; font-family: "Liberation Sans", sans-serif; font-size: 14px; }
.row { display: flex; align-items: center; height: 25px; margin-bottom: 5px; padding-left: 32px; }
.row-root { padding-left: 8px; font-weight: 700; }
.twist { width: 13px; margin-right: 9px; }
.row-root .twist { width: 15px; }
.cell { display: flex; align-items: center; gap: 10px; height: 25px; max-width: 300px; padding: 0 8px 0 4px; background: #f1f1f1; white-space: nowrap; overflow: hidden; }
.row-root .cell { width: 322px; max-width: none; padding-right: 10px; gap: 7px; }
.row-text { margin-left: 7px; }
.root-name { flex: 1; display: flex; align-items: center; gap: 16px; height: 20px; padding-left: 4px; background: #999; color: #fff; }

.comments { position: absolute; left: 1px; bottom: 7px; width: 371px; border-top-color: #f1f1f1; }
.comments .head-title { padding-left: 25px; }

.viewbar { position: absolute; left: 807px; bottom: 5px; height: 30px; display: flex; gap: 9px; padding-right: 4px; background: #f1f1f1; }
.view-btn { gap: 5px; }
.view-btn:nth-child(n+3) { margin-left: 2px; }
.view-btn:nth-child(n+6) { margin-left: -2px; gap: 3px; }
.view-active { background: #0696d7; padding: 0 4px; gap: 5px; margin-right: -6px; }

.timeline { background: #f1f1f1; border-top: 2px solid #cacaca; height: 55px; }
.time-scroll { width: 276px; height: 8px; margin-left: 1px; background: #cacaca; border-radius: 0 0 5px 5px; }
.time-body { display: flex; align-items: flex-start; padding: 5px 6px 0 8px; }
.player { display: flex; gap: 13px; margin-top: 13px; }
.steps { display: flex; margin-left: 23px; flex: 1; }
.step {
  flex: none; width: 30px; height: 38px; display: flex; flex-direction: column; align-items: center;
  background: linear-gradient(#c6c6c6, #c6c6c6) no-repeat right bottom / 100% 2px;
}
.step:first-child { background-size: 50% 2px; }
.step-icon { flex: none; width: 30px; height: 30px; justify-content: center; border-radius: 2px; }
.step-on { background: #e3e61e; }
.tick { width: 2px; height: 8px; background: #c6c6c6; }
.settings { margin-top: 11px; }
```
FILE: app.js
```js
const icon = (id, w, h = w) => `<svg width="${w}" height="${h}"><use href="#${id}"/></svg>`;

const groups = [
  ["CRÉER", ["sketch", "extrude", "revolve", "hole", "pattern", "form"]],
  ["MODIFIER", ["press", "fillet", "shell", "combine", "split", "move"]],
  ["ASSEMBLER", ["component", "joint"]],
  ["CONSTRUIRE", ["plane"]],
  ["INSPECTER", ["measure"]],
  ["INSÉRER", ["insert", "image"]],
  ["SÉLECTIONNER", ["select"]],
  ["POSITION", ["pos1", "pos2"]]
];
document.getElementById("groups").innerHTML = groups.map(([name, tools]) =>
  `<div class="group${tools.length > 2 ? " group-wide" : ""}${tools.length > 1 ? " group-multi" : ""}"><div class="tools">` +
  tools.map(t => `<button aria-label="${t}">${icon("i-" + t, 40)}</button>`).join("") +
  `</div><button class="group-label">${name} <span class="caret"></span></button></div>`).join("");

const rows = [
  ["Paramètres du document", "gear"],
  ["Vues existantes", "folder"],
  ["Origine", "hidden", "folder"],
  ["Liaisons", "eye", "folder"],
  ...["Piece liaison support moteur ...", "Tube alu 20x20 L65 v10:1", "Piece liaison support moteur ...",
    "Tube alu 20x20 L150 v5:2", "Piece liaison support moteur ...", "Tube alu 20x20 L65 v10:2",
    "Piece liaison support moteur ...", "Plat alu L191 l20 h2 v8:2", "moteur v2:1", "Plat alu L150 l20 h2 v4:1",
    "Tube alu avant 20x20 L150 v...", "Plat alu L150 l20 h2 v4:2", "Vis M4 L10 avec rondelle v3:1",
    "Vis M4 L10 avec rondelle v3:2", "Vis M4 L10 avec rondelle v3:3", "Vis M4 L10 avec rondelle v3:4",
    "Vis M4 L10 avec rondelle v3:5", "Vis M4 L10 avec rondelle v3:6"
  ].map(t => [t, "eye", t.includes("L150 v5") ? "pinned" : "cube", "link"])
];
document.getElementById("tree").innerHTML =
  `<li class="row row-root"><button class="twist" aria-label="Replier">${icon("t-open", 15)}</button>
   <div class="cell">${icon("t-eye", 21)}<span class="root-name">${icon("t-assembly", 21)}Assemblage support moteu...</span>
   <svg width="18" height="18" viewBox="0 0 18 18"><circle cx="9" cy="9" r="7.500" fill="#fff" stroke="#333" stroke-width="1.300"/><circle cx="9" cy="9" r="3" fill="#333"/></svg></div></li>` +
  rows.map(([text, ...icons]) =>
    `<li class="row"><button class="twist" aria-label="Déplier">${icon("t-closed", 13, 17)}</button>
     <div class="cell">${icons.map(i => icon("t-" + i, 21)).join("")}<span class="row-text">${text}</span></div></li>`).join("");

const kinds = "LLJLJLJLJLJLJLJLJLPLJ";
const names = { L: "link", J: "joint", P: "pin" };
let steps = "";
for (let i = 0; i < 56; i++) {
  const k = kinds[i] || (i % 2 ? "J" : "L");
  steps += `<div class="step"><button class="step-icon${i === 4 ? " step-on" : ""}" aria-label="Étape ${i + 1}">${icon("m-" + names[k], 21)}</button><span class="tick"></span></div>`;
}
document.getElementById("steps").innerHTML = steps;

/* ground grid: origin corner plus two axis vectors, 61 cells each way */
const O = [267.5, 256], U = [707, -37], V = [677, 474], N = 61;
const at = (u, v) => [O[0] + U[0] * u / N + V[0] * v / N, O[1] + U[1] * u / N + V[1] * v / N];
const line = (a, b, color) => `<path d="M${a.map(n => n.toFixed(1))}L${b.map(n => n.toFixed(1))}" stroke="${color}"/>`;
let minor = "", major = "";
for (let i = 1; i < N; i++) {
  const mu = i % 5 === 2, mv = i % 5 === 3;
  const lu = line(at(i, 0), at(i, N), mu ? "#cacaca" : "#eee");
  const lv = line(at(0, i), at(N, i), mv ? "#cacaca" : "#eee");
  if (mu) major += lu; else minor += lu;
  if (mv) major += lv; else minor += lv;
}
const corners = [at(0, 0), at(N, 0), at(N, N), at(0, N)].map(p => p.join()).join(" ");
document.getElementById("grid").innerHTML = minor + major + `<polygon points="${corners}" fill="none" stroke="#808080" stroke-width="1.200"/>`;

let labels = "";
[250, 200, 150, 100, 50, 0, 50, 100, 150, 200, 250, 300].forEach((n, i) => {
  const [x, y] = at(2 + 5 * i, 0);
  labels += `<text text-anchor="end" transform="matrix(.85 .68 -.9 .05 ${x - 6} ${y - 3})">${n}</text>`;
});
[400, 350, 300, 250, 200, 150, 100, 50, 0, 50, 100, 150].forEach((n, i) => {
  const [x, y] = at(N, 3 + 5 * i);
  labels += `<text transform="matrix(1 -.05 .8 .7 ${x + 5} ${y + 4})">${n}</text>`;
});
document.getElementById("gridLabels").innerHTML = labels;
```
